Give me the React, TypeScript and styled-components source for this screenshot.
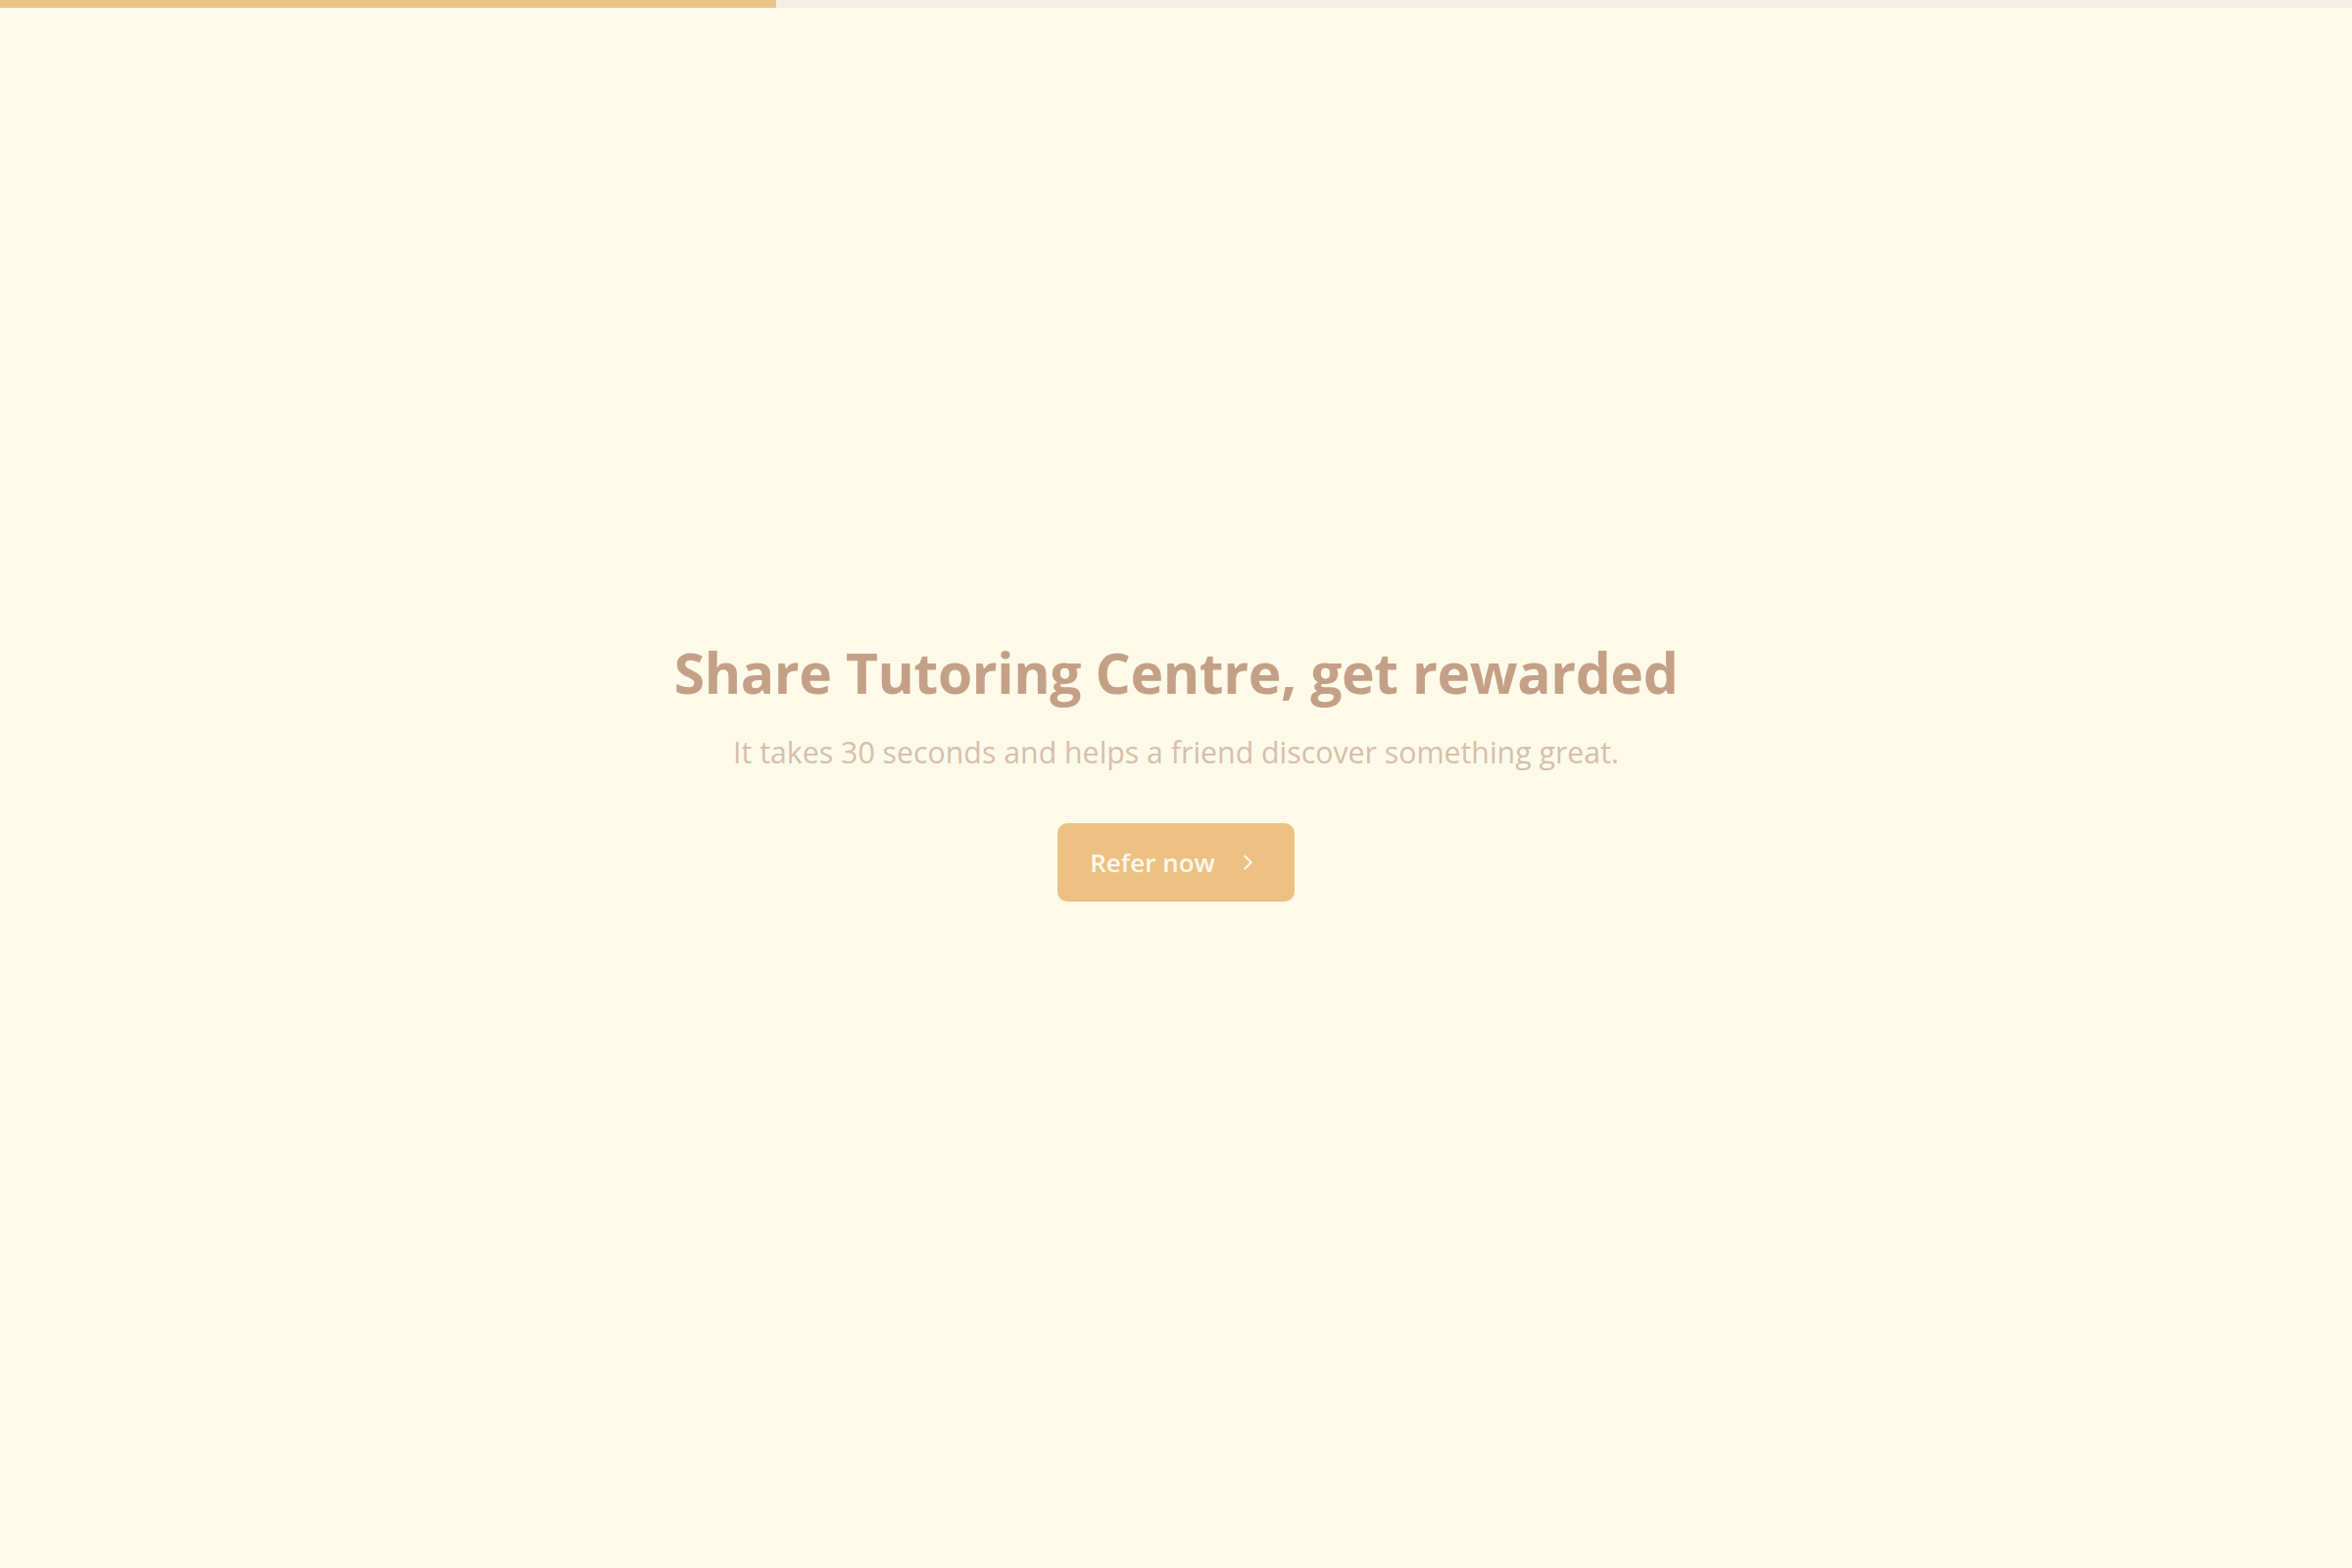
import React from "react";
import styled, { createGlobalStyle } from "styled-components";

const GlobalStyle = createGlobalStyle`
  html, body {
    margin: 0;
    padding: 0;
    background: #fefae9;
  }
  body {
    font-family: "Open Sans", "Noto Sans", sans-serif;
  }
`;

const Page = styled.div`
  min-height: 100vh;
  display: flex;
  flex-direction: column;
  background: #fefae9;
`;

const Track = styled.div`
  height: 8px;
  background: #f2f0e6;
`;

const Fill = styled.div`
  height: 100%;
  background: #efc286;
`;

const Center = styled.main`
  flex: 1;
  display: flex;
  flex-direction: column;
  align-items: center;
  justify-content: center;
  padding-bottom: 36px;
`;

const Title = styled.h1`
  margin: 0;
  font-size: 57px;
  line-height: 68px;
  font-weight: 700;
  color: #c4a087;
  letter-spacing: -0.4px;
`;

const Subtitle = styled.p`
  margin: 27px 0 0;
  font-size: 30.3px;
  line-height: 42px;
  font-weight: 400;
  color: #d6bfab;
`;

const Button = styled.button`
  margin-top: 51px;
  display: flex;
  align-items: center;
  gap: 22px;
  height: 80px;
  padding: 0 37px 0 33px;
  border: none;
  border-radius: 10px;
  background: #ecc183;
  color: #fdf8ec;
  font-family: inherit;
  font-size: 26px;
  font-weight: 600;
  cursor: pointer;
  svg {
    display: block;
  }
`;

const Chevron = () => (
  <svg width="22" height="22" viewBox="0 0 24 24" fill="none" stroke="currentColor" strokeWidth="2.2" strokeLinecap="round" strokeLinejoin="round">
    <path d="M9 5l7 7-7 7" />
  </svg>
);

export default function App() {
  const progress = 33;
  return (
    <Page>
      <GlobalStyle />
      <Track>
        <Fill style={{ width: `${progress}%` }} />
      </Track>
      <Center>
        <Title>Share Tutoring Centre, get rewarded</Title>
        <Subtitle>It takes 30 seconds and helps a friend discover something great.</Subtitle>
        <Button>
          Refer now
          <Chevron />
        </Button>
      </Center>
    </Page>
  );
}
